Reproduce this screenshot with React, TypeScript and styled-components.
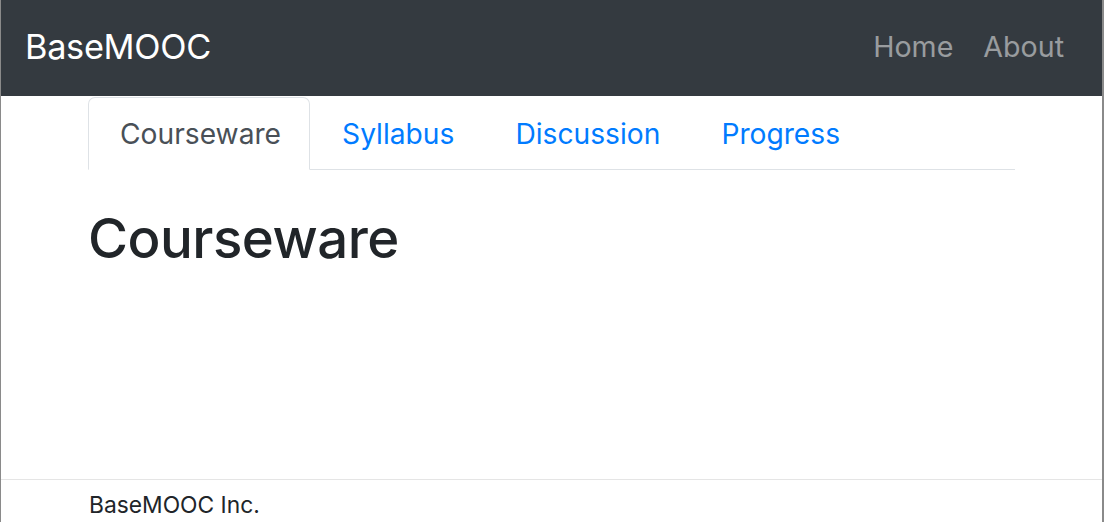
import React from "react";
import styled, { createGlobalStyle } from "styled-components";

const Global = createGlobalStyle`
  html, body { margin: 0; padding: 0; background: #fff; }
  body { font-family: Inter, "Liberation Sans", Arial, sans-serif; color: #212529; }
`;

const Page = styled.div`
  box-sizing: border-box;
  height: 522px;
  display: flex;
  flex-direction: column;
  border-left: 1px solid #8a8a8a;
  border-right: 2px solid #8a8a8a;
  overflow: hidden;
`;

const NavBar = styled.header`
  height: 96px;
  flex: none;
  background: #343a40;
  display: flex;
  align-items: center;
  justify-content: space-between;
  padding: 0 38px 0 24px;
`;

const Brand = styled.a`
  color: #fff;
  font-size: 34.3px;
  letter-spacing: -0.3px;
  text-decoration: none;
  margin-top: -3px;
`;

const NavLinks = styled.nav`
  display: flex;
  gap: 30px;
`;

const NavLink = styled.a`
  color: rgba(255, 255, 255, 0.5);
  font-size: 28.6px;
  text-decoration: none;
  margin-top: -3px;
`;

const Main = styled.main`
  flex: 1;
  padding: 1px 87px 0 87px;
`;

const Tabs = styled.ul`
  list-style: none;
  margin: 0;
  padding: 0;
  display: flex;
  border-bottom: 1px solid #dee2e6;
`;

const Tab = styled.li<{ $active?: boolean }>`
  height: 73px;
  box-sizing: border-box;
  display: flex;
  align-items: center;
  padding: 0 28px 0 31px;
  margin-bottom: -1px;
  font-size: 28.2px;
  border: 1px solid ${(p) => (p.$active ? "#dee2e6" : "transparent")};
  border-bottom-color: ${(p) => (p.$active ? "#fff" : "transparent")};
  border-radius: 7px 7px 0 0;
  background: ${(p) => (p.$active ? "#fff" : "transparent")};
  color: ${(p) => (p.$active ? "#495057" : "#007bff")};
`;

const Title = styled.h1`
  margin: 36px 0 0 0;
  font-size: 54.6px;
  font-weight: 500;
  line-height: 1.2;
  letter-spacing: -0.5px;
  color: #212529;
`;

const Footer = styled.footer`
  flex: none;
  height: 43px;
  border-top: 1px solid #e5e5e5;
  padding: 11px 0 0 88px;
  box-sizing: border-box;
  font-size: 22.8px;
  color: #212529;
`;

export default function App() {
  const tabs = ["Courseware", "Syllabus", "Discussion", "Progress"];
  return (
    <>
      <Global />
      <Page>
        <NavBar>
          <Brand href="#">BaseMOOC</Brand>
          <NavLinks>
            <NavLink href="#">Home</NavLink>
            <NavLink href="#">About</NavLink>
          </NavLinks>
        </NavBar>
        <Main>
          <Tabs>
            {tabs.map((t, i) => (
              <Tab key={t} $active={i === 0}>
                {t}
              </Tab>
            ))}
          </Tabs>
          <Title>Courseware</Title>
        </Main>
        <Footer>BaseMOOC Inc.</Footer>
      </Page>
    </>
  );
}
